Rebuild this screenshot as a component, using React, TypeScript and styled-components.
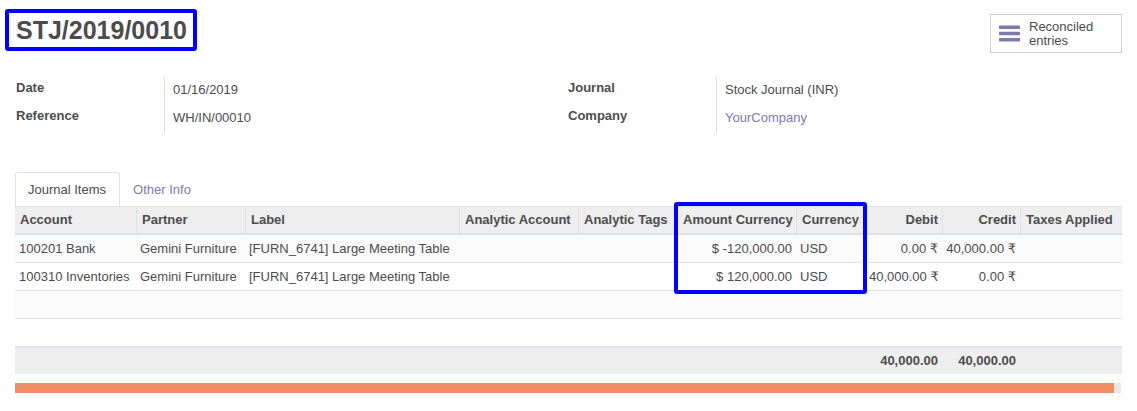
import React from "react";
import styled, { createGlobalStyle, css } from "styled-components";

const GlobalStyle = createGlobalStyle`
  html, body {
    margin: 0;
    padding: 0;
    background: #ffffff;
  }
  body {
    font-family: "Liberation Sans", "DejaVu Sans", Arial, sans-serif;
    font-size: 13px;
    color: #4c4c4c;
  }
  * { box-sizing: border-box; }
`;

const Page = styled.div`
  width: 1137px;
  padding: 0 15px;
`;

const TopBar = styled.div`
  display: flex;
  justify-content: space-between;
  align-items: flex-start;
`;

const TitleBox = styled.div`
  margin: 9px 0 0 -10px;
  border: 4px solid #0000ff;
  border-radius: 3px;
  padding: 0 6px 0 7px;
`;

const Title = styled.h1`
  margin: 0;
  font-size: 25px;
  line-height: 34px;
  font-weight: bold;
  color: #4c4c4c;
`;

const ReconcileButton = styled.button`
  margin-top: 14px;
  width: 132px;
  height: 39px;
  display: flex;
  align-items: center;
  gap: 9px;
  padding: 0 0 0 8px;
  background: #ffffff;
  border: 1px solid #cfcfcf;
  font-family: inherit;
  font-size: 13px;
  color: #4c4c4c;
  text-align: left;
  cursor: pointer;
`;

const ButtonLabel = styled.span`
  line-height: 14px;
  padding-top: 1px;
`;

const Fields = styled.div`
  margin-top: 24px;
  display: grid;
  grid-template-columns: 552px 1fr;
  padding-left: 1px;
`;

const FieldGroup = styled.div`
  display: grid;
  grid-template-columns: 148px 1fr;
  grid-auto-rows: 28px;
`;

const FieldLabel = styled.div`
  font-weight: bold;
  line-height: 20px;
  padding-top: 1px;
`;

const FieldValue = styled.div<{ $link?: boolean }>`
  border-left: 1px solid #dcdcdc;
  padding: 3px 0 0 8px;
  line-height: 20px;
  color: ${(p) => (p.$link ? "#7c7bad" : "#4c4c4c")};
`;

const Tabs = styled.div`
  margin-top: 39px;
  display: flex;
  height: 34px;
`;

const Tab = styled.div<{ $active?: boolean }>`
  padding: 0 13px 0 12px;
  line-height: 33px;
  border: 1px solid transparent;
  border-bottom: none;
  border-radius: 3px 3px 0 0;
  color: #7c7bad;
  ${(p) =>
    p.$active &&
    css`
      border-color: #dee2e6;
      color: #4c4c4c;
      background: #ffffff;
    `}
`;

const TableWrap = styled.div`
  position: relative;
`;

const Table = styled.table`
  width: 100%;
  table-layout: fixed;
  border-collapse: separate;
  border-spacing: 0;
`;

const Th = styled.th<{ $right?: boolean; $first?: boolean }>`
  background: #eeeeee;
  border-top: 1px solid #dee2e6;
  border-bottom: 2px solid #dee2e6;
  border-left: ${(p) => (p.$first ? "none" : "1px solid #e0e0e0")};
  padding: 0 4px 0 5px;
  line-height: 26px;
  font-weight: bold;
  text-align: ${(p) => (p.$right ? "right" : "left")};
  white-space: nowrap;
  overflow: hidden;
`;

const Tr = styled.tr<{ $odd?: boolean }>`
  background: ${(p) => (p.$odd ? "#fafafa" : "#ffffff")};
`;

const Td = styled.td<{ $right?: boolean }>`
  border-bottom: 1px solid #dee2e6;
  padding: 0 4px;
  line-height: 27px;
  height: 28px;
  text-align: ${(p) => (p.$right ? "right" : "left")};
  white-space: nowrap;
  overflow: hidden;
`;

const FootTd = styled.td<{ $right?: boolean }>`
  background: #eeeeee;
  border-top: 1px solid #dee2e6;
  padding: 0 4px;
  line-height: 26px;
  font-weight: bold;
  text-align: ${(p) => (p.$right ? "right" : "left")};
  white-space: nowrap;
`;

const Highlight = styled.div`
  position: absolute;
  top: -4px;
  left: 659px;
  width: 193px;
  height: 92px;
  border: 4px solid #0000ff;
  border-radius: 3px;
  pointer-events: none;
`;

const Progress = styled.div`
  margin-top: 9px;
  width: 1106px;
  height: 10px;
  background: #e9e9e9;
`;

const ProgressFill = styled.div`
  height: 100%;
  background: #ef8d67;
`;

const BarsIcon = () => (
  <svg width="21" height="17" viewBox="0 0 21 17" aria-hidden="true">
    <rect x="0" y="0.5" width="21" height="3.4" rx="0.6" fill="#7c7bad" />
    <rect x="0" y="6.8" width="21" height="3.4" rx="0.6" fill="#7c7bad" />
    <rect x="0" y="13.1" width="21" height="3.4" rx="0.6" fill="#7c7bad" />
  </svg>
);

type Col = { label: string; width: number; right?: boolean };

const columns: Col[] = [
  { label: "Account", width: 121 },
  { label: "Partner", width: 109 },
  { label: "Label", width: 214 },
  { label: "Analytic Account", width: 119 },
  { label: "Analytic Tags", width: 99 },
  { label: "Amount Currency", width: 119 },
  { label: "Currency", width: 69 },
  { label: "Debit", width: 77, right: true },
  { label: "Credit", width: 78, right: true },
  { label: "Taxes Applied", width: 102 },
];

const rows = [
  [
    "100201 Bank",
    "Gemini Furniture",
    "[FURN_6741] Large Meeting Table",
    "",
    "",
    "$ -120,000.00",
    "USD",
    "0.00 ₹",
    "40,000.00 ₹",
    "",
  ],
  [
    "100310 Inventories",
    "Gemini Furniture",
    "[FURN_6741] Large Meeting Table",
    "",
    "",
    "$ 120,000.00",
    "USD",
    "40,000.00 ₹",
    "0.00 ₹",
    "",
  ],
];

const rightAligned = [false, false, false, false, false, true, false, true, true, false];

export default function App() {
  const emptyRows = 2;
  return (
    <>
      <GlobalStyle />
      <Page>
        <TopBar>
          <TitleBox>
            <Title>STJ/2019/0010</Title>
          </TitleBox>
          <ReconcileButton>
            <BarsIcon />
            <ButtonLabel>
              Reconciled
              <br />
              entries
            </ButtonLabel>
          </ReconcileButton>
        </TopBar>

        <Fields>
          <FieldGroup>
            <FieldLabel>Date</FieldLabel>
            <FieldValue>01/16/2019</FieldValue>
            <FieldLabel>Reference</FieldLabel>
            <FieldValue>WH/IN/00010</FieldValue>
          </FieldGroup>
          <FieldGroup>
            <FieldLabel>Journal</FieldLabel>
            <FieldValue>Stock Journal (INR)</FieldValue>
            <FieldLabel>Company</FieldLabel>
            <FieldValue $link>YourCompany</FieldValue>
          </FieldGroup>
        </Fields>

        <Tabs>
          <Tab $active>Journal Items</Tab>
          <Tab>Other Info</Tab>
        </Tabs>

        <TableWrap>
          <Table>
            <colgroup>
              {columns.map((c) => (
                <col key={c.label} style={{ width: c.width }} />
              ))}
            </colgroup>
            <thead>
              <tr>
                {columns.map((c, i) => (
                  <Th key={c.label} $right={c.right} $first={i === 0}>
                    {c.label}
                  </Th>
                ))}
              </tr>
            </thead>
            <tbody>
              {rows.map((r, ri) => (
                <Tr key={ri} $odd={ri % 2 === 0}>
                  {r.map((v, ci) => (
                    <Td key={ci} $right={rightAligned[ci]}>
                      {v}
                    </Td>
                  ))}
                </Tr>
              ))}
              {Array.from({ length: emptyRows }).map((_, ei) => (
                <Tr key={`e${ei}`} $odd={(rows.length + ei) % 2 === 0}>
                  {columns.map((c) => (
                    <Td key={c.label} />
                  ))}
                </Tr>
              ))}
            </tbody>
            <tfoot>
              <tr>
                {columns.map((c, i) => (
                  <FootTd key={c.label} $right={c.right}>
                    {i === 7 || i === 8 ? "40,000.00" : ""}
                  </FootTd>
                ))}
              </tr>
            </tfoot>
          </Table>
          <Highlight />
        </TableWrap>

        <Progress>
          <ProgressFill style={{ width: `${(1099 / 1106) * 100}%` }} />
        </Progress>
      </Page>
    </>
  );
}
